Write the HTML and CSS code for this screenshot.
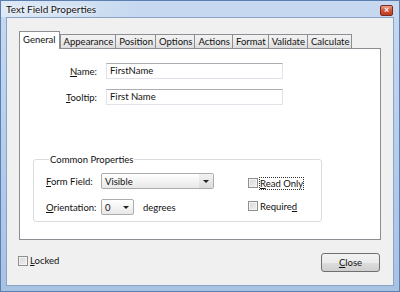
FILE: index.html
```html
<!DOCTYPE html>
<html lang="en">
<head>
    <meta charset="UTF-8">
    <title>Text Field Properties</title>
    <link rel="stylesheet" href="styles.css">
</head>
<body>
    <div class="window">
        <div class="titlebar">
            <span class="title">Text Field Properties</span>
            <span class="close-x">&#215;</span>
        </div>
        <div class="client">
            <div class="tabs">
                <div class="tab active">General</div>
                <div class="tab">Appearance</div>
                <div class="tab">Position</div>
                <div class="tab">Options</div>
                <div class="tab">Actions</div>
                <div class="tab">Format</div>
                <div class="tab">Validate</div>
                <div class="tab">Calculate</div>
            </div>
            <div class="panel">
                <div class="fields">
                    <label class="field-label"><u>N</u>ame:</label>
                    <div class="textbox">FirstName</div>
                    <label class="field-label"><u>T</u>ooltip:</label>
                    <div class="textbox">First Name</div>
                </div>
                <fieldset class="group">
                    <legend>Common Properties</legend>
                    <div class="group-grid">
                        <label class="group-label"><u>F</u>orm Field:</label>
                        <div class="combo combo-wide">
                            <span class="combo-text">Visible</span>
                            <span class="combo-btn"><span class="arrow"></span></span>
                        </div>
                        <div class="check"><span class="box"></span><span class="focus"><u>R</u>ead Only</span></div>
                        <label class="group-label"><u>O</u>rientation:</label>
                        <div class="orient">
                            <div class="combo combo-small">
                                <span class="combo-text">0</span>
                                <span class="combo-btn"><span class="arrow"></span></span>
                            </div>
                            <span class="unit">degrees</span>
                        </div>
                        <div class="check"><span class="box"></span><span>Require<u>d</u></span></div>
                    </div>
                </fieldset>
            </div>
            <div class="footer">
                <div class="check"><span class="box"></span><span><u>L</u>ocked</span></div>
                <button class="button"><u>C</u>lose</button>
            </div>
        </div>
    </div>
</body>
</html>
```

FILE: styles.css
```css
body {
    margin: 0;
    font-family: Lato, "Open Sans", sans-serif;
    font-size: 9.5px;
    color: #111;
}
.window {
    width: 400px;
    height: 292px;
    box-sizing: border-box;
    padding: 0 5px 5px;
    display: flex;
    flex-direction: column;
    background: linear-gradient(180deg, #c6d9f0 0%, #b3cbea 60%, #a8c2e4 100%);
    border: 1px solid #5a7fb0;
}
.titlebar {
    height: 16px;
    display: flex;
    align-items: center;
    justify-content: space-between;
    background: linear-gradient(90deg, rgba(255, 255, 255, 0.45) 0%, rgba(255, 255, 255, 0) 35%);
    margin: 0 -5px;
    padding: 0 6px 0 5px;
}
.title {
    font-size: 10px;
    text-shadow: 0 0 6px #fff, 0 0 3px #fff;
}
.close-x {
    width: 13px;
    height: 11px;
    margin-top: 2px;
    border: 1px solid #7a2b20;
    border-radius: 2px;
    box-sizing: border-box;
    background: linear-gradient(180deg, #e8a08a 0%, #d2553a 50%, #c0391e 100%);
    color: #fff;
    font-size: 9px;
    line-height: 8px;
    text-align: center;
    font-weight: bold;
}
.client {
    flex: 1;
    display: flex;
    flex-direction: column;
    background: #f0f0f0;
    border: 1px solid #8aa4c6;
    padding: 13px 12px 0;
}
.tabs {
    display: flex;
    align-items: flex-end;
    height: 17px;
    position: relative;
    z-index: 1;
}
.tab {
    height: 14px;
    line-height: 13px;
    padding: 0 2px 0 3px;
    border: 1px solid #8c8e94;
    border-bottom: none;
    margin-left: -1px;
    box-sizing: border-box;
    background: linear-gradient(180deg, #f2f2f2 0%, #ebebeb 50%, #dddddd 100%);
}
.tab.active {
    height: 18px;
    line-height: 16px;
    margin-left: 0;
    padding: 0 3px;
    background: #fff;
    margin-bottom: -1px;
    position: relative;
    z-index: 2;
}
.tab.active + .tab {
    margin-left: 0;
}
.panel {
    flex: 1;
    background: #fff;
    border: 1px solid #8c8e94;
    display: flex;
    flex-direction: column;
    justify-content: space-between;
    padding: 14px 0 17px 13px;
}
.fields {
    display: grid;
    grid-template-columns: 59px 177px;
    column-gap: 9px;
    row-gap: 10px;
    margin-left: 5px;
    align-items: center;
}
.field-label {
    text-align: right;
}
.textbox {
    height: 16px;
    box-sizing: border-box;
    border: 1px solid #e2e3ea;
    border-top-color: #abadb3;
    padding-left: 3px;
    line-height: 14px;
    background: #fff;
}
.group {
    width: 289px;
    box-sizing: border-box;
    margin: 0;
    border: 1px solid #dcdcdc;
    border-radius: 3px;
    padding: 8px 0 6px 12px;
}
.group legend {
    padding: 0 1px;
    margin-left: 3px;
    line-height: 11px;
}
.group-grid {
    display: grid;
    grid-template-columns: 55px 113px auto;
    row-gap: 10px;
    align-items: center;
}
.group-label {
    white-space: nowrap;
}
.combo {
    height: 16px;
    box-sizing: border-box;
    border: 1px solid #acacac;
    border-radius: 2px;
    display: flex;
    align-items: center;
    background: linear-gradient(180deg, #ffffff 0%, #f4f4f4 50%, #e8e8e8 100%);
}
.combo-wide {
    width: 113px;
}
.combo-small {
    width: 33px;
}
.combo-text {
    flex: 1;
    padding-left: 3px;
}
.combo-btn {
    width: 14px;
    height: 100%;
    display: flex;
    align-items: center;
    justify-content: center;
    background: linear-gradient(180deg, #f3f3f3 0%, #dcdcdc 100%);
}
.combo-small .combo-btn {
    background: none;
}
.arrow {
    width: 0;
    height: 0;
    border-left: 3px solid transparent;
    border-right: 3px solid transparent;
    border-top: 3px solid #222;
}
.orient {
    display: flex;
    align-items: center;
    gap: 9px;
}
.check {
    display: flex;
    align-items: center;
    gap: 2px;
    margin-left: 34px;
    white-space: nowrap;
}
.group .check {
    margin-top: 4px;
}
.group .check + .group-label + .orient + .check {
    margin-top: -2px;
}
.box {
    width: 10px;
    height: 10px;
    box-sizing: border-box;
    border: 1px solid #8e8f8f;
    background: linear-gradient(135deg, #d6d6d6 0%, #f2f2f2 100%);
    box-shadow: inset 0 0 0 1px #f4f4f4;
}
.focus {
    outline: 1px dotted #333;
}
.footer {
    height: 45px;
    display: flex;
    justify-content: space-between;
    align-items: flex-start;
    padding-top: 13px;
    box-sizing: border-box;
}
.footer .check {
    margin-left: -1px;
    margin-top: 2px;
}
.button {
    width: 59px;
    height: 19px;
    margin-right: 1px;
    font-family: inherit;
    font-size: 9.5px;
    color: #111;
    border: 1px solid #707070;
    border-radius: 3px;
    background: linear-gradient(180deg, #f2f2f2 0%, #ebebeb 50%, #dddddd 51%, #cfcfcf 100%);
    padding: 0;
}
```
